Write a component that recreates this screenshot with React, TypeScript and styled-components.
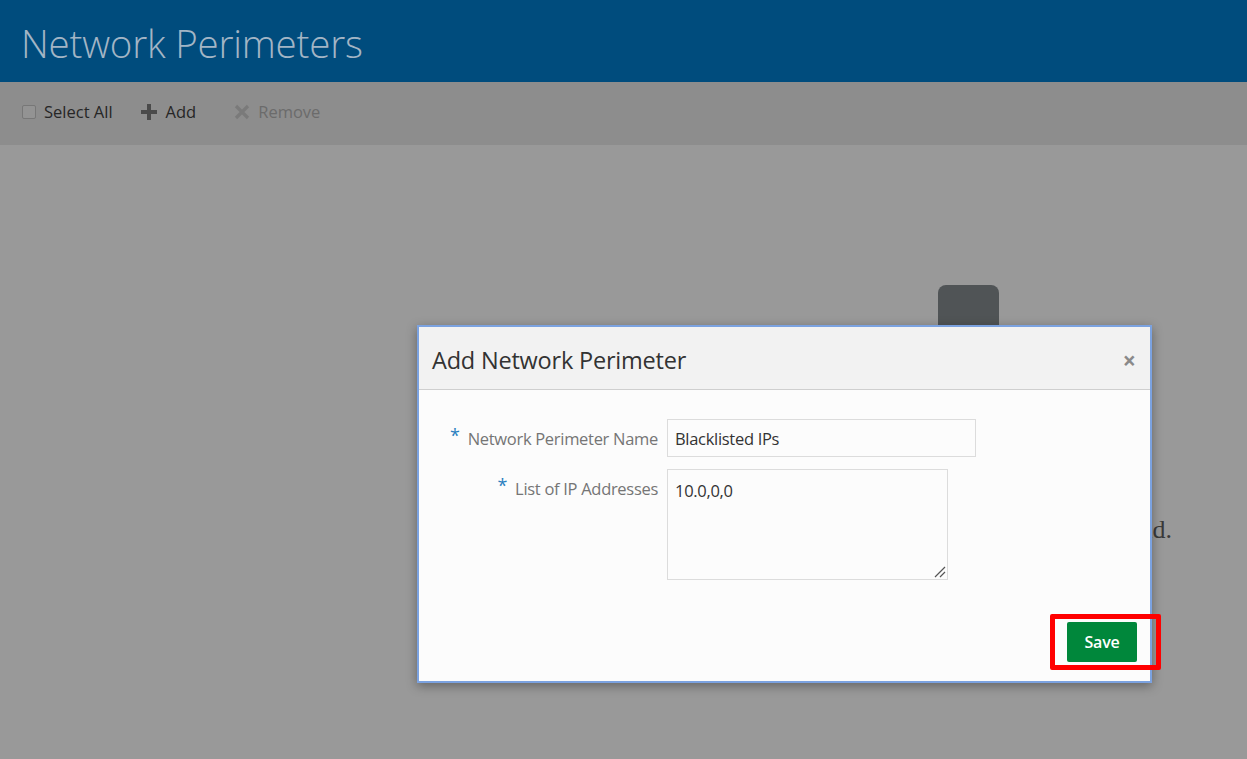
import React from "react";
import styled, { createGlobalStyle } from "styled-components";

const GlobalStyle = createGlobalStyle`
  html, body { margin: 0; padding: 0; }
  body {
    background: #999999;
    font-family: "Open Sans", "Noto Sans", "Liberation Sans", sans-serif;
    overflow: hidden;
  }
`;

const Page = styled.div`
  position: relative;
  width: 1247px;
  height: 759px;
  display: flex;
  flex-direction: column;
  background: #999999;
  overflow: hidden;
`;

const Header = styled.header`
  height: 82px;
  flex: none;
  background: #004c7d;
  display: flex;
  align-items: center;
  padding-left: 21px;
`;

const Title = styled.h1`
  margin: 0;
  font-weight: 300;
  font-size: 38.5px;
  letter-spacing: -0.2px;
  color: #a3b5c5;
  line-height: 1;
  padding-top: 4px;
`;

const Toolbar = styled.div`
  height: 63px;
  flex: none;
  background: #8d8d8d;
  display: flex;
  align-items: center;
  padding: 0 0 4px 22px;
  box-sizing: border-box;
  gap: 27px;
`;

const ToolItem = styled.div<{ $disabled?: boolean; $gapLeft?: number }>`
  display: flex;
  align-items: center;
  gap: 8px;
  font-size: 16.5px;
  margin-left: ${(p) => p.$gapLeft ?? 0}px;
  color: ${(p) => (p.$disabled ? "#6b6b6b" : "#262626")};
`;

const CheckBox = styled.span`
  width: 12px;
  height: 12px;
  border: 1px solid #777;
  border-radius: 2px;
  background: #939393;
`;

const Content = styled.main`
  flex: 1;
  display: flex;
  padding: 140px 0 0 766px;
`;

const EmptyState = styled.div`
  width: 406px;
  display: flex;
  flex-direction: column;
  align-items: center;
`;

const EmptyIcon = styled.div`
  width: 61px;
  height: 60px;
  margin-left: -2px;
  border-radius: 8px;
  background: #505456;
`;

const EmptyText = styled.p`
  align-self: stretch;
  text-align: right;
  margin: 170px 0 0 0;
  font-family: "Liberation Serif", serif;
  font-size: 26px;
  color: #3a3a3a;
`;

const Dialog = styled.div`
  position: absolute;
  left: 417px;
  top: 325px;
  width: 731px;
  height: 354px;
  border: 2px solid #7ba2e0;
  background: #fcfcfc;
  box-shadow: 0 3px 10px rgba(0, 0, 0, 0.35);
  display: flex;
  flex-direction: column;
`;

const DialogHeader = styled.div`
  height: 63px;
  flex: none;
  background: #f2f2f2;
  border-bottom: 1px solid #cfcfcf;
  display: flex;
  align-items: center;
  justify-content: space-between;
  padding: 4px 14px 0 13px;
  box-sizing: border-box;
`;

const DialogTitle = styled.h2`
  margin: 0;
  font-weight: 400;
  font-size: 23.5px;
  letter-spacing: -0.2px;
  color: #333333;
`;

const CloseButton = styled.span`
  font-size: 23px;
  font-weight: 700;
  color: #8a8a8a;
  line-height: 1;
`;

const DialogBody = styled.div`
  flex: 1;
  display: flex;
  flex-direction: column;
  gap: 12px;
  padding-top: 29px;
`;

const FormRow = styled.div`
  display: flex;
  align-items: flex-start;
  gap: 9px;
`;

const Label = styled.label`
  width: 239px;
  flex: none;
  text-align: right;
  font-size: 16.5px;
  color: #757575;
  padding-top: 7px;
  letter-spacing: -0.3px;
`;

const Required = styled.span`
  color: #2a7fbf;
  font-size: 18px;
  margin-right: 8px;
  position: relative;
  top: -3px;
`;

const TextInput = styled.div`
  width: 300px;
  height: 36px;
  border: 1px solid #dcdcdc;
  background: #fcfcfc;
  display: flex;
  align-items: center;
  padding-left: 7px;
  font-size: 16.5px;
  color: #333;
  letter-spacing: -0.3px;
`;

const TextArea = styled.div`
  position: relative;
  width: 272px;
  height: 100px;
  border: 1px solid #dcdcdc;
  padding: 9px 0 0 7px;
  font-size: 16.5px;
  color: #333;
  letter-spacing: -0.3px;
`;

const Grip = styled.svg`
  position: absolute;
  right: 1px;
  bottom: 1px;
`;

const DialogFooter = styled.div`
  display: flex;
  justify-content: flex-end;
  padding: 0 13px 19px 0;
`;

const SaveWrap = styled.div`
  position: relative;
`;

const SaveButton = styled.button`
  width: 70px;
  height: 40px;
  border: none;
  border-radius: 2px;
  background: #00873b;
  color: #ffffff;
  font-family: inherit;
  font-size: 16px;
  font-weight: 600;
  letter-spacing: -0.2px;
`;

const Highlight = styled.div`
  position: absolute;
  left: -17px;
  top: -8px;
  right: -24px;
  bottom: -8px;
  border: 5px solid #ff0000;
  border-radius: 2px;
  pointer-events: none;
`;

export default function App() {
  return (
    <>
      <GlobalStyle />
      <Page>
        <Header>
          <Title>Network Perimeters</Title>
        </Header>
        <Toolbar>
          <ToolItem>
            <CheckBox />
            Select All
          </ToolItem>
          <ToolItem>
            <svg width="18" height="18" viewBox="0 0 18 18">
              <path d="M7 1h4v6h6v4h-6v6H7v-6H1V7h6z" fill="#4a4a4a" />
            </svg>
            Add
          </ToolItem>
          <ToolItem $disabled $gapLeft={11}>
            <svg width="16" height="16" viewBox="0 0 16 16">
              <path d="M2 2l12 12M14 2L2 14" stroke="#7a7a7a" strokeWidth="3.2" />
            </svg>
            Remove
          </ToolItem>
        </Toolbar>
        <Content>
          <EmptyState>
            <EmptyIcon />
            <EmptyText>No network perimeters found.</EmptyText>
          </EmptyState>
        </Content>
        <Dialog>
          <DialogHeader>
            <DialogTitle>Add Network Perimeter</DialogTitle>
            <CloseButton>×</CloseButton>
          </DialogHeader>
          <DialogBody>
            <FormRow>
              <Label>
                <Required>*</Required>Network Perimeter Name
              </Label>
              <TextInput>Blacklisted IPs</TextInput>
            </FormRow>
            <FormRow>
              <Label>
                <Required>*</Required>List of IP Addresses
              </Label>
              <TextArea>
                10.0,0,0
                <Grip width="14" height="14" viewBox="0 0 14 14">
                  <path d="M13 3L3 13M13 8L8 13" stroke="#555" strokeWidth="1.2" />
                </Grip>
              </TextArea>
            </FormRow>
          </DialogBody>
          <DialogFooter>
            <SaveWrap>
              <SaveButton>Save</SaveButton>
              <Highlight />
            </SaveWrap>
          </DialogFooter>
        </Dialog>
      </Page>
    </>
  );
}
